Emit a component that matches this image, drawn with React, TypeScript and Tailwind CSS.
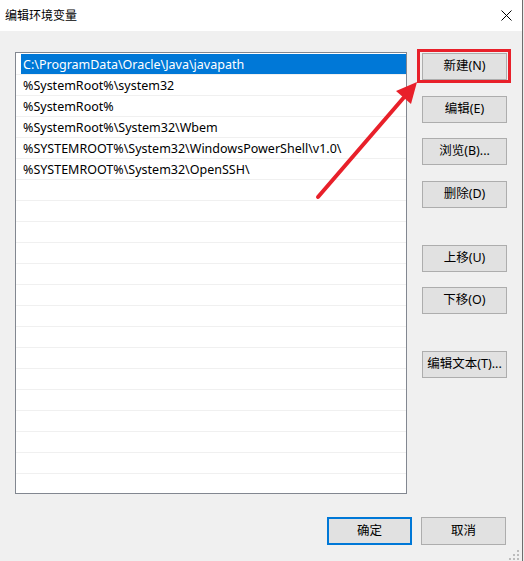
import React from 'react';

const paths = [
  'C:\\ProgramData\\Oracle\\Java\\javapath',
  '%SystemRoot%\\system32',
  '%SystemRoot%',
  '%SystemRoot%\\System32\\Wbem',
  '%SYSTEMROOT%\\System32\\WindowsPowerShell\\v1.0\\',
  '%SYSTEMROOT%\\System32\\OpenSSH\\',
];

const font = { fontFamily: '"Noto Sans", "Noto Sans CJK SC", sans-serif' };

const WinButton = ({ label, className = '' }: { label: string; className?: string }) => (
  <div
    className={`h-[27px] w-[85px] flex items-center justify-center bg-[#e1e1e1] border border-[#adadad] text-[12.5px] text-black ${className}`}
  >
    {label}
  </div>
);

const App = () => {
  const rows = Array.from({ length: 21 }, (_, i) => paths[i] ?? '');
  return (
    <div className="flex w-[524px] h-[561px] overflow-hidden" style={font}>
      <div className="relative flex flex-col w-[522px] h-full bg-[#f0f0f0]">
        {/* title bar */}
        <div className="flex items-center justify-between h-[31px] bg-white pl-[5px] pr-[10px]">
          <span className="text-[12px] text-black">编辑环境变量</span>
          <svg width="11" height="11" viewBox="0 0 11 11">
            <path d="M0.5 0.5 L10.5 10.5 M10.5 0.5 L0.5 10.5" stroke="#000" strokeWidth="1" />
          </svg>
        </div>

        <div className="flex pl-[15px] pt-[21px]">
          {/* list box */}
          <div className="w-[392px] h-[442px] border border-[#828790] bg-white pt-px overflow-hidden">
            {rows.map((p, i) => (
              <div key={i} className="h-[21px] border-b border-[#f0f0f0]">
                {i === 0 ? (
                  <div className="ml-[5px] h-[20px] bg-[#0078d7] text-white text-[12.5px] leading-[21px] pl-[2px]">
                    {p}
                  </div>
                ) : (
                  <div className="ml-[5px] h-[20px] text-black text-[12.5px] leading-[21px] pl-[2px]">{p}</div>
                )}
              </div>
            ))}
          </div>

          {/* side buttons */}
          <div className="flex flex-col ml-[15px] pt-px">
            <div className="relative">
              <WinButton label="新建(N)" />
              <div className="absolute -left-[5px] -right-[4px] -top-[4px] -bottom-[3px] border-[3px] border-[#e8202a]" />
            </div>
            <WinButton label="编辑(E)" className="mt-[16px]" />
            <WinButton label="浏览(B)..." className="mt-[15px]" />
            <WinButton label="删除(D)" className="mt-[16px]" />
            <WinButton label="上移(U)" className="mt-[37px]" />
            <WinButton label="下移(O)" className="mt-[15px]" />
            <WinButton label="编辑文本(T)..." className="mt-[37px]" />
          </div>
        </div>

        {/* bottom buttons */}
        <div className="flex justify-end gap-[9px] pr-[16px] mt-[23px]">
          <div className="h-[28px] w-[85px] flex items-center justify-center bg-[#e1e1e1] border-2 border-[#0078d7] text-[12.5px] text-black">
            确定
          </div>
          <WinButton label="取消" className="h-[28px]" />
        </div>

        {/* resize grip */}
        <svg width="10" height="10" viewBox="0 0 10 10" className="absolute right-[3px] bottom-[1px]">
          <g fill="#bcbcbc">
            <rect x="8" y="0" width="2" height="2" />
            <rect x="4" y="4" width="2" height="2" />
            <rect x="8" y="4" width="2" height="2" />
            <rect x="0" y="8" width="2" height="2" />
            <rect x="4" y="8" width="2" height="2" />
            <rect x="8" y="8" width="2" height="2" />
          </g>
        </svg>

        {/* red annotation arrow */}
        <svg width="522" height="561" className="absolute left-0 top-0 pointer-events-none">
          <line x1="318" y1="197" x2="406" y2="95" stroke="#e8202a" strokeWidth="4" strokeLinecap="round" />
          <polygon points="417,82 396,91 411,104" fill="#e8202a" />
        </svg>
      </div>
      <div className="w-px h-full bg-[#6d6d6d]" />
      <div className="w-px h-full bg-[#ececec]" />
    </div>
  );
};

export default App;
